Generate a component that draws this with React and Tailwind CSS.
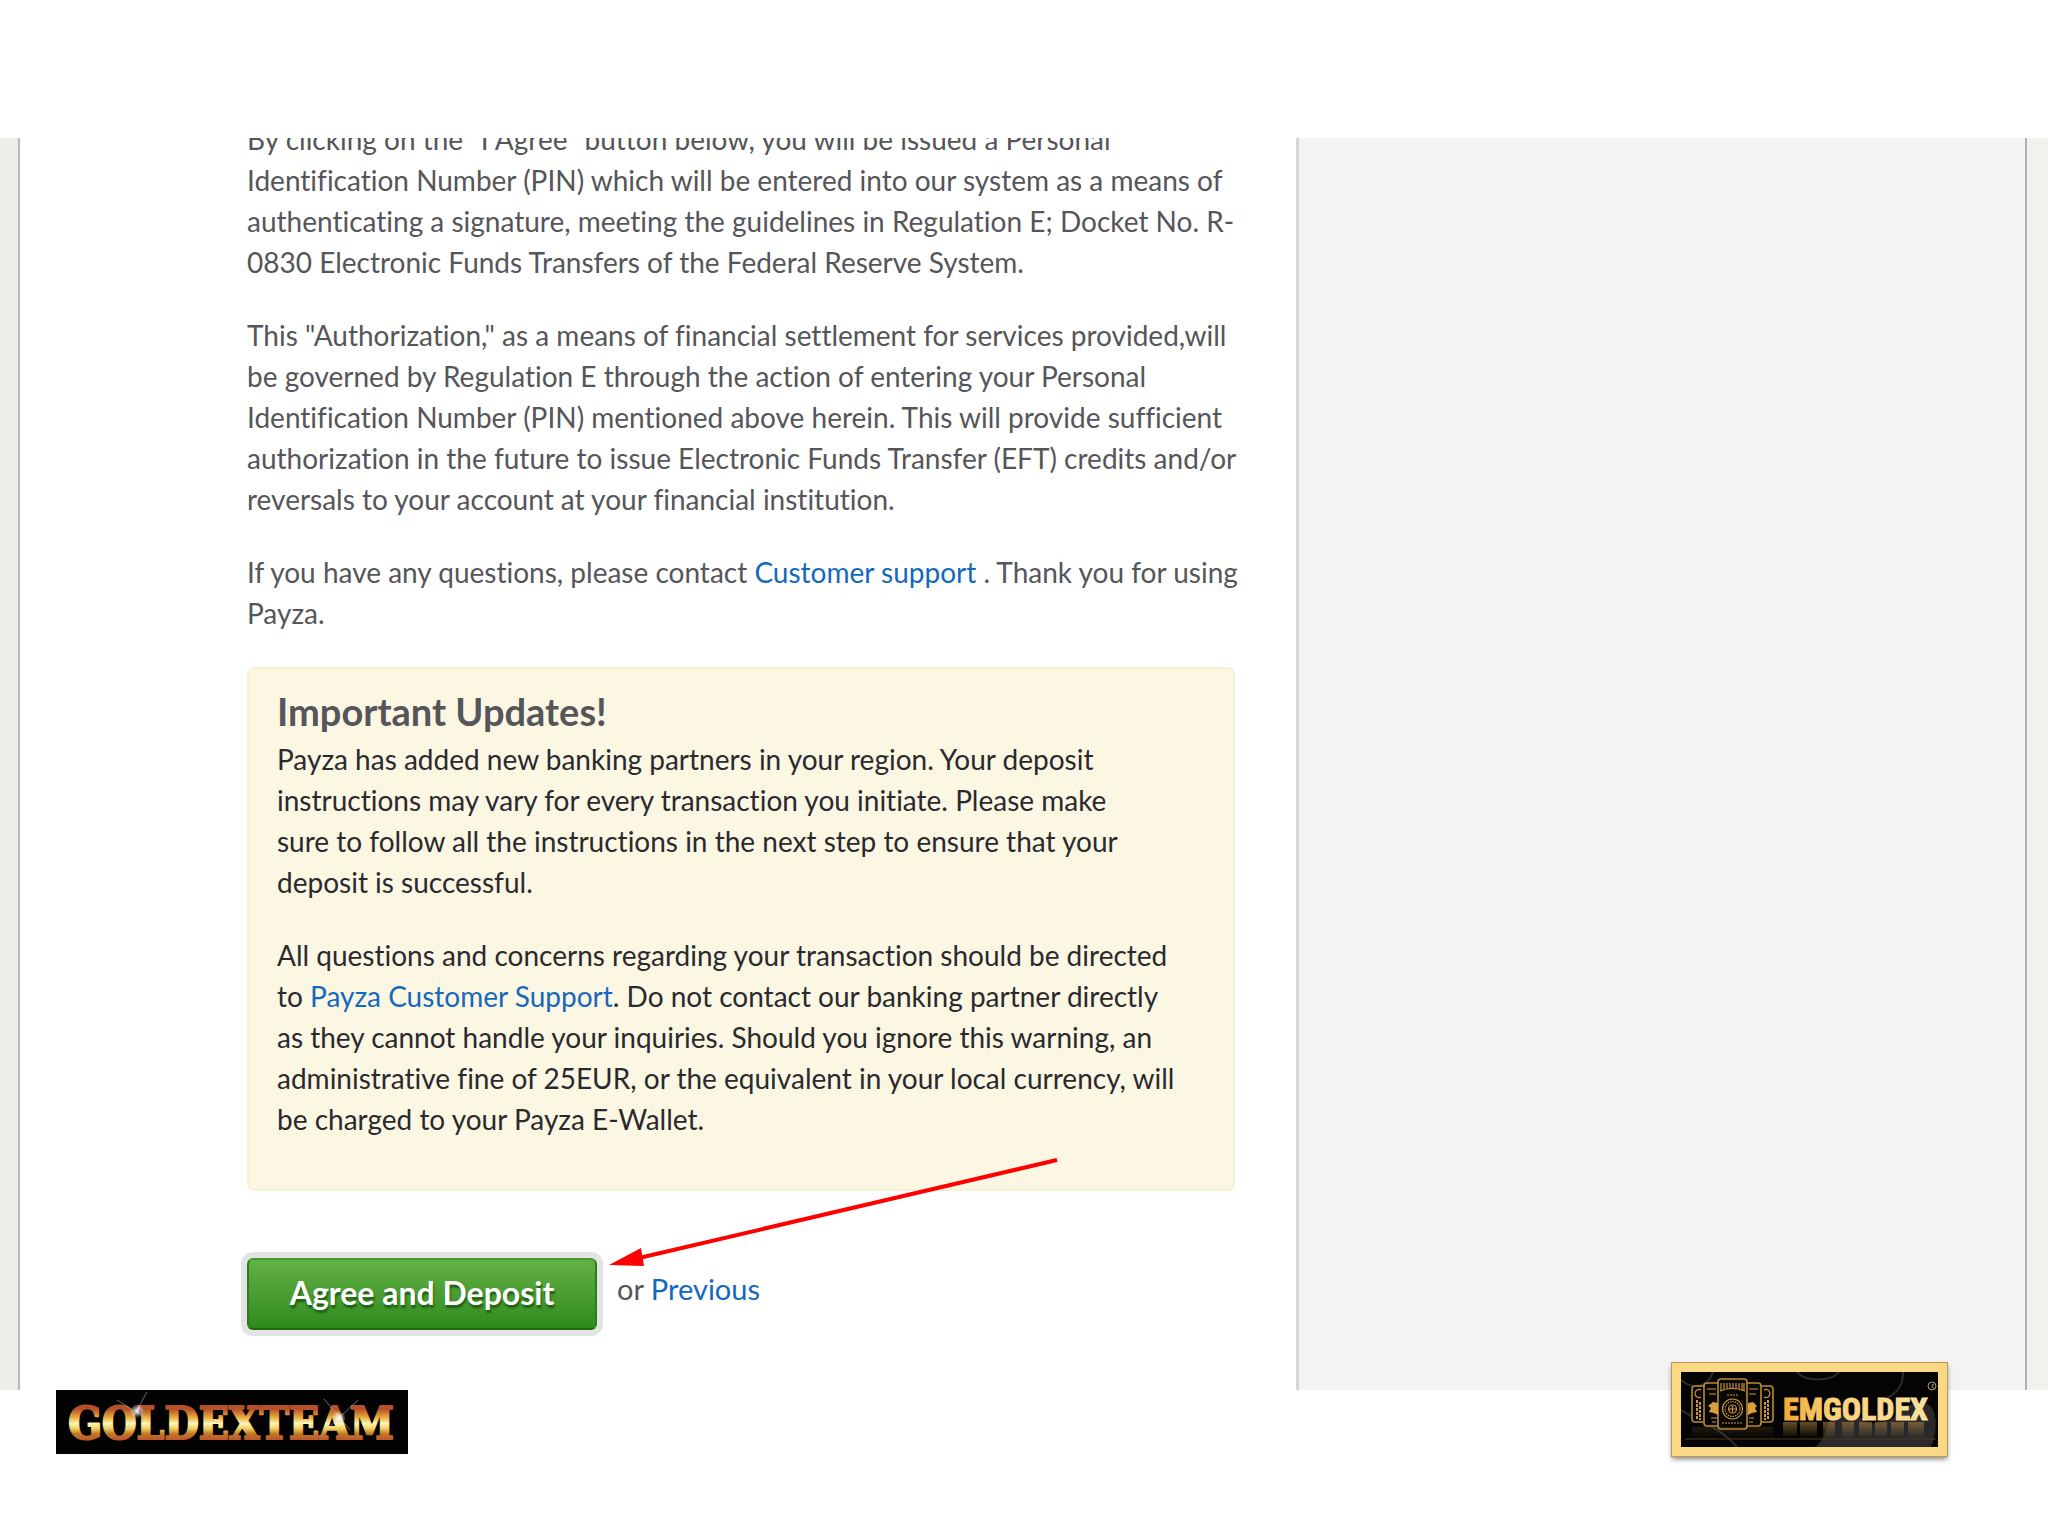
import React from "react";

function GoldexTeamLogo() {
  return (
    <svg className="block w-[352px] h-16" viewBox="0 0 352 64" role="img" aria-label="Goldexteam">
      <defs>
        <linearGradient id="gold" x1="0" y1="0" x2="0" y2="1">
          <stop offset="0.22" stopColor="#b5512a" />
          <stop offset="0.38" stopColor="#e8ac3c" />
          <stop offset="0.5" stopColor="#fff6b8" />
          <stop offset="0.6" stopColor="#f0cf62" />
          <stop offset="0.7" stopColor="#c07a24" />
          <stop offset="0.8" stopColor="#c05a2c" />
        </linearGradient>
        <radialGradient id="spark">
          <stop offset="0" stopColor="#fff" />
          <stop offset="1" stopColor="#fff" stopOpacity="0" />
        </radialGradient>
      </defs>
      <rect width="352" height="64" fill="#030202" />
      <text
        x="175"
        y="49"
        textAnchor="middle"
        fill="url(#gold)"
        stroke="url(#gold)"
        strokeWidth="2"
        strokeLinejoin="round"
        className="font-['DejaVu_Serif_Condensed','DejaVu_Serif',serif] font-bold text-[44px]"
      >
        GOLDEXTEAM
      </text>
      <g stroke="#cfd3d8" strokeWidth="1" opacity="0.5">
        <path d="M91 2 L70 40 M61 10 L90 28" />
        <path d="M302 10 L264 46 M268 9 L294 40" />
      </g>
      <circle cx="81" cy="21" r="7" fill="url(#spark)" />
      <circle cx="283" cy="28" r="7" fill="url(#spark)" />
    </svg>
  );
}

function EmgoldexLogo() {
  return (
    <svg className="block w-full" viewBox="0 0 257 75" role="img" aria-label="Emgoldex">
      <defs>
        <linearGradient id="letters" x1="0" y1="0" x2="1" y2="0">
          <stop offset="0" stopColor="#f0a832" />
          <stop offset="0.35" stopColor="#fbd27a" />
          <stop offset="1" stopColor="#fbe0a0" />
        </linearGradient>
        <linearGradient id="mirror" x1="0" y1="0" x2="0" y2="1">
          <stop offset="0" stopColor="#a5803c" stopOpacity="0.6" />
          <stop offset="1" stopColor="#a5803c" stopOpacity="0" />
        </linearGradient>
      </defs>
      <rect width="257" height="75" fill="#050404" />
      <g fill="none" stroke="#2b2b2d" strokeWidth="2">
        <path d="M0 8 C12 18 26 16 32 0" />
        <path d="M116 0 C124 10 150 10 158 0" />
        <path d="M222 0 C222 12 218 20 206 26" />
        <path d="M0 38 C16 48 40 56 56 75" />
      </g>
      <path d="M134 75 C150 64 140 44 164 42 C186 40 176 56 202 50 C224 46 212 30 246 32 C257 36 257 60 250 75 Z" fill="#29292b" />

      {/* stacked gold bars */}
      <g fill="#090704" stroke="#b98a35" strokeWidth="1.6">
        <rect x="11" y="14" width="30" height="36" rx="3" />
        <rect x="62" y="14" width="30" height="36" rx="3" />
        <rect x="23" y="11" width="26" height="43" rx="3" />
        <rect x="54" y="11" width="26" height="43" rx="3" />
        <rect x="37" y="7" width="29" height="50" rx="3" />
      </g>
      <g fill="none" stroke="#c8963c" strokeWidth="1.2">
        <circle cx="51.5" cy="37" r="10" />
        <circle cx="51.5" cy="37" r="7.5" strokeDasharray="1.5 1" />
        <circle cx="51.5" cy="37" r="4" />
        <path d="M48 37 h7 M51.5 34 v6" />
        <path d="M40 19 V11 M43 18 V11 M46 17 V11 M49 17 V11 M52 17 V11 M55 17 V11 M58 17 V11 M61 18 V11 M63 19 V11" />
        <path d="M39 19 Q51 14 64 19" />
        <path d="M46 23 h11 M41 51 h21" strokeDasharray="2 1" />
        <path d="M26 17 h9 M28 22 h7 M30 46 h6 M31 50 h4 M68 17 h9 M68 22 h7 M68 46 h5 M68 50 h4" />
        <path d="M20 18 a4 4 0 1 0 0 7 M83 18 a4 4 0 1 1 0 7" />
        <path d="M16 28 v20 M19 30 v18 M84 30 v18 M87 28 v20" strokeWidth="2" strokeDasharray="3 1" />
      </g>
      <g fill="#d99f3a">
        <path d="M37 31 l-5 -1 l-5 4 l3 2 l-2 4 l5 1 l4 2 Z" />
        <path d="M67 31 l5 -1 l4 4 l-2 2 l2 4 l-5 1 l-4 2 Z" />
      </g>
      <path d="M11 55 H92 V66 H11 Z" fill="url(#mirror)" opacity="0.3" />

      <text
        x="102"
        y="48"
        fill="url(#letters)"
        stroke="url(#letters)"
        strokeWidth="1"
        className="font-['Liberation_Sans_Narrow','Roboto_Condensed',sans-serif] font-bold text-[32px]"
      >
        EMGOLDEX
      </text>
      <path
        d="M102 50h14v14h-14z M119 50h17v16h-17z M142 50h12v15h-12z M161 50h12v15h-12z M178 50h13v15h-13z M194 50h12v15h-12z M210 50h13v15h-13z M227 50h16v16h-16z"
        fill="url(#mirror)"
      />
      <path d="M4 67 H255" stroke="#4a3a1c" />
      <circle cx="251" cy="14" r="4" fill="none" stroke="#a89a78" strokeWidth="1" />
      <path d="M253 12 a2 2 0 1 0 0 4" fill="none" stroke="#a89a78" strokeWidth="1" />
    </svg>
  );
}

function Arrow() {
  return (
    <svg
      className="absolute left-[362px] -top-[104px] w-[450px] h-[112px] pointer-events-none"
      viewBox="0 0 450 112"
      aria-hidden="true"
    >
      <path d="M30 104 L448 6" stroke="#fe0000" strokeWidth="4" />
      <path d="M0 111 L32 94 L35 112 Z" fill="#fe0000" />
    </svg>
  );
}

const link = "text-[#1468bd] hover:underline";

export default function App() {
  return (
    <div className="min-h-screen bg-white pt-[138px] font-[Lato,sans-serif] text-[28px] leading-[41px] text-[#55555a] [font-variant-ligatures:none]">
      <main className="grid grid-cols-[20px_minmax(0,1fr)_729px_23px] overflow-hidden">
        <div className="bg-[#eeeeea] border-r-2 border-[#b9b9b9]" />

        <div className="pl-[227px] pb-[60px] pr-10">
          <div className="-mt-[19px] space-y-8 whitespace-nowrap">
            <p>
              By clicking on the "I Agree" button below, you will be issued a Personal<br />
              Identification Number (PIN) which will be entered into our system as a means of<br />
              authenticating a signature, meeting the guidelines in Regulation E; Docket No. R-<br />
              0830 Electronic Funds Transfers of the Federal Reserve System.
            </p>
            <p>
              This "Authorization," as a means of financial settlement for services provided,will<br />
              be governed by Regulation E through the action of entering your Personal<br />
              Identification Number (PIN) mentioned above herein. This will provide sufficient<br />
              authorization in the future to issue Electronic Funds Transfer (EFT) credits and/or<br />
              reversals to your account at your financial institution.
            </p>
            <p>
              If you have any questions, please contact{" "}
              <a href="#support" className={link}>Customer support</a> . Thank you for using<br />
              Payza.
            </p>
          </div>

          {/* Notice */}
          <section className="mt-[33px] h-[524px] w-[988px] rounded-lg border-2 border-[#f8f0d4] bg-[#fcf7e3] px-7 pt-[22px] whitespace-nowrap text-[#2a2a2e]">
            <h2 className="text-[38px] leading-[41px] font-bold text-[#55555a]">Important Updates!</h2>
            <div className="mt-[7px] space-y-8">
              <p>
                Payza has added new banking partners in your region. Your deposit<br />
                instructions may vary for every transaction you initiate. Please make<br />
                sure to follow all the instructions in the next step to ensure that your<br />
                deposit is successful.
              </p>
              <p>
                All questions and concerns regarding your transaction should be directed<br />
                to <a href="#payza-support" className={link}>Payza Customer Support</a>. Do not contact our banking partner directly<br />
                as they cannot handle your inquiries. Should you ignore this warning, an<br />
                administrative fine of 25EUR, or the equivalent in your local currency, will<br />
                be charged to your Payza E-Wallet.
              </p>
            </div>
          </section>

          {/* Actions */}
          <div className="relative mt-[67px] flex items-center gap-5">
            <button
              type="button"
              className="h-[72px] w-[350px] rounded-md border-2 border-t-[#459a2c] border-x-[#2c7f18] border-b-[#226b10] bg-linear-to-b from-[#62b146] to-[#2f8a1c] pb-1 text-[32px] leading-[41px] font-bold text-white ring-6 ring-[#e4e4e6] text-shadow-[1px_3px_2px_#1f5f12] cursor-pointer"
            >
              Agree and Deposit
            </button>
            <span className="pb-3 text-[29px]">
              or <a href="#previous" className={link}>Previous</a>
            </span>
            <Arrow />
          </div>
        </div>

        <aside className="border-l-3 border-[#d6d6d8] bg-[#f3f2f5]" />
        <div className="border-l-2 border-[#b3b3b5] bg-[#f2f2ef]" />
      </main>

      <footer className="flex items-start justify-between pl-14 pr-[101px]">
        <GoldexTeamLogo />
        <div className="-mt-[27px] w-[275px] border-9 border-[#fbd884] outline outline-[#b79a58] shadow-[0_3px_5px_#00000080]">
          <EmgoldexLogo />
        </div>
      </footer>
    </div>
  );
}
